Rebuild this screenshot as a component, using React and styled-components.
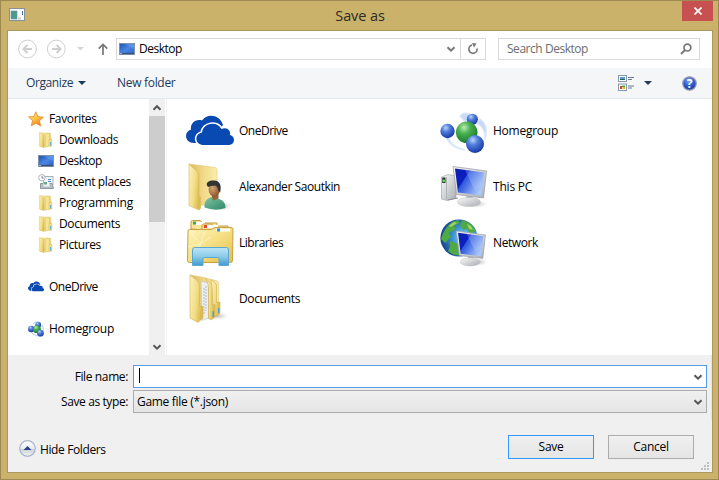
import React from "react";
import styled, { createGlobalStyle } from "styled-components";

const GlobalStyle = createGlobalStyle`
  * { box-sizing: border-box; }
  body { margin: 0; background: #cbb26b; }
`;

const Window = styled.div`
  width: 719px;
  height: 480px;
  padding: 0 5px 6px 6px;
  display: flex;
  flex-direction: column;
  background: #cbb26b;
  border: 1px solid #9e8a50;
  font: 12px/16px "Open Sans", "Noto Sans", sans-serif;
  color: #000;
`;

const TitleBar = styled.header`
  flex: 0 0 29px;
  display: grid;
  grid-template-columns: 33px 1fr 31px;
`;

const AppIcon = styled.div`
  padding: 7px 0 0 2px;
  line-height: 0;
`;

const Title = styled.h1`
  margin: 0;
  padding: 5px 2px 0 0;
  text-align: center;
  font: 400 14.5px/20px "Open Sans", sans-serif;
  letter-spacing: -0.1px;
  color: #2d2a22;
`;

const CloseButton = styled.button`
  width: 31px;
  height: 20px;
  padding: 0;
  border: 0;
  display: flex;
  align-items: center;
  justify-content: center;
  background: #c75050;
`;

const Client = styled.main`
  flex: 0 0 443px;
  width: 706px;
  border: 1px solid #ae975a;
  background: #fff;
  display: flex;
  flex-direction: column;
`;

const Text = styled.span`
  white-space: pre;
  letter-spacing: ${(p) => p.$ls ?? -0.3}px;
`;

const NavBar = styled.nav`
  flex: 0 0 37px;
  display: flex;
  align-items: flex-start;
  padding: 7px 12px 0 10px;
`;

const NavIcons = styled.div`
  width: 98px;
  height: 22px;
`;

const AddressBox = styled.div`
  width: 370px;
  height: 22px;
  border: 1px solid #d9d9d9;
  display: grid;
  grid-template-columns: 20px 1fr 14px 25px;
  align-items: center;
  padding-left: 2px;
  svg { display: block; }
`;

const Refresh = styled.div`
  height: 20px;
  border-left: 1px solid #d9d9d9;
  display: flex;
  align-items: center;
  justify-content: center;
`;

const SearchBox = styled.div`
  width: 202px;
  height: 22px;
  margin-left: 12px;
  padding: 0 7px 0 8px;
  border: 1px solid #d9d9d9;
  display: flex;
  align-items: center;
  justify-content: space-between;
  color: #6d6d6d;
`;

const ToolBar = styled.div`
  flex: 0 0 31px;
  display: flex;
  align-items: center;
  padding: 0 15px 0 18px;
  background: #f5f6f7;
  border-bottom: 1px solid #e4e7ea;
  color: #1e395b;
  svg { display: block; }
`;

const ToolItem = styled.div`
  display: flex;
  align-items: center;
  gap: ${(p) => p.$gap ?? 5}px;
  margin-left: ${(p) => (p.$push ? "auto" : `${p.$left ?? 0}px`)};
`;

const Body = styled.div`
  flex: 0 0 256px;
  display: flex;
`;

const Sidebar = styled.aside`
  width: 141px;
  padding-top: 9px;
`;

const SideRow = styled.div`
  height: 21px;
  margin-top: ${(p) => (p.$section ? 21 : 0)}px;
  padding-left: ${(p) => (p.$nested ? 30 : 20)}px;
  display: flex;
  align-items: center;
  gap: 5px;
  svg { display: block; }
`;

const ScrollBar = styled.div`
  width: 16px;
  background: #f0f0f0;
  display: flex;
  flex-direction: column;
  justify-content: space-between;
`;

const ScrollButton = styled.div`
  height: 17px;
  display: flex;
  align-items: center;
  justify-content: center;
`;

const Thumb = styled.div`
  height: 106px;
  margin-bottom: auto;
  background: #cdcdcd;
`;

const FileGrid = styled.section`
  flex: 1;
  margin-left: 1px;
  border-left: 1px solid #f3f3f3;
  padding: 4px 0 0 19px;
  display: grid;
  grid-template-columns: 254px 254px;
  grid-template-rows: repeat(4, 56px);
`;

const FileItem = styled.div`
  display: flex;
  align-items: center;
  gap: 5px;
  height: 56px;
  svg { display: block; overflow: visible; }
`;

const Footer = styled.footer`
  flex: 1;
  background: linear-gradient(#e3e3e3, #e3e3e3) right top / 1px 65px no-repeat #f0f0f0;
  padding: 10px 5px 0 0;
  display: flex;
  flex-direction: column;
`;

const Field = styled.label`
  display: grid;
  grid-template-columns: 120px 574px;
  column-gap: 5px;
  align-items: center;
  height: 23px;
  margin-bottom: 2px;
  text-align: right;
`;

const FieldBox = styled.div`
  height: 23px;
  padding: 0 3px 0 ${(p) => (p.$active ? 5 : 3)}px;
  border: 1px solid ${(p) => (p.$active ? "#569de5" : "#acacac")};
  background: ${(p) => (p.$active ? "#fff" : "linear-gradient(#f0f0f0, #e5e5e5)")};
  display: flex;
  align-items: center;
  justify-content: space-between;
`;

const Caret = styled.span`
  width: 1px;
  height: 15px;
  margin-top: -3px;
  background: #000;
`;

const Actions = styled.div`
  display: flex;
  align-items: center;
  height: 24px;
  margin-top: 20px;
  padding: 0 13px 0 11px;
`;

const HideFolders = styled.div`
  display: flex;
  align-items: center;
  gap: 4px;
  margin-right: auto;
  padding-top: 5px;
  svg { display: block; margin-top: -3px; }
`;

const Button = styled.button`
  width: 86px;
  height: 24px;
  margin-left: 14px;
  padding: 0 0 1px;
  border: 1px solid ${(p) => (p.$primary ? "#3399ff" : "#acacac")};
  background: linear-gradient(#f0f0f0, #e5e5e5);
  font: inherit;
  color: #000;
`;

const GripRow = styled.div`
  display: flex;
  justify-content: flex-end;
  padding-top: 3px;
  margin-right: -2px;
`;

const Stop = (o, c) => <stop key={o} offset={o} stopColor={c} />;

const HiddenSvg = styled.svg`
  display: block;
  width: 0;
  height: 0;
`;

const Gradients = () => (
  <HiddenSvg aria-hidden="true">
    <defs>
      <linearGradient id="folder" x1="0" x2="1" y2="1">{Stop(0, "#fff6c0")}{Stop(0.5, "#f5df83")}{Stop(1, "#e2bd4c")}</linearGradient>
      <linearGradient id="inner" x2="1" y2="0">{Stop(0, "#d9b75a")}{Stop(0.5, "#f0d988")}{Stop(1, "#fbeeae")}</linearGradient>
      <linearGradient id="flap" x2="1" y2="0.4">{Stop(0, "#fbf2bd")}{Stop(0.6, "#f2dd85")}{Stop(1, "#dcba52")}</linearGradient>
      <linearGradient id="screen" x2="1" y2="0.6">{Stop(0, "#0a20a8")}{Stop(0.4, "#0b1fc4")}{Stop(0.42, "#2b55dc")}{Stop(1, "#a9c8fa")}</linearGradient>
      <linearGradient id="desk" x2="1" y2="1">{Stop(0, "#1c4fae")}{Stop(0.5, "#4a86e3")}{Stop(1, "#2b62cb")}</linearGradient>
      <linearGradient id="metal" x2="1" y2="1">{Stop(0, "#fafafa")}{Stop(1, "#a9adb2")}</linearGradient>
      <linearGradient id="stand" x2="0" y2="1">{Stop(0, "#bfe6f6")}{Stop(0.5, "#8ccbe9")}{Stop(1, "#3e9bd0")}</linearGradient>
      <linearGradient id="star" x2="0.6" y2="1">{Stop(0, "#fff0a0")}{Stop(0.5, "#ffc84a")}{Stop(1, "#f4801c")}</linearGradient>
      <linearGradient id="shirt" x2="1" y2="1">{Stop(0, "#83c3a4")}{Stop(1, "#2e8a68")}</linearGradient>
      <radialGradient id="skin" cx="0.35" cy="0.4" r="0.7">{Stop(0, "#d6a56f")}{Stop(1, "#83502c")}</radialGradient>
      <radialGradient id="blue" cx="0.38" cy="0.28" r="0.7">{Stop(0, "#b9d3fb")}{Stop(0.4, "#527fdb")}{Stop(1, "#1b3daa")}</radialGradient>
      <radialGradient id="green" cx="0.38" cy="0.28" r="0.7">{Stop(0, "#bdecb5")}{Stop(0.4, "#4bb252")}{Stop(1, "#1a7d2c")}</radialGradient>
      <radialGradient id="globe" cx="0.65" cy="0.5" r="0.65">{Stop(0, "#8fdcf7")}{Stop(0.5, "#3d93d3")}{Stop(1, "#143f8c")}</radialGradient>
      <radialGradient id="help" cx="0.45" cy="0.3" r="0.7">{Stop(0, "#7ba4f5")}{Stop(0.6, "#2a55cf")}{Stop(1, "#1a37a0")}</radialGradient>
      <radialGradient id="shade">{Stop(0, "#bbb")}<stop offset="1" stopColor="#ddd" stopOpacity="0" /></radialGradient>
      <linearGradient id="round" x2="0" y2="1">{Stop(0, "#fdfdff")}{Stop(0.5, "#e9edf0")}{Stop(0.55, "#ccd3d8")}{Stop(1, "#f0f4f5")}</linearGradient>
    </defs>
  </HiddenSvg>
);

const Icon = ({ size = 48, children }) => (
  <svg width={size} height={size} viewBox="0 0 48 48">{children}</svg>
);

const OneDriveIcon = ({ size }) => (
  <Icon size={size}>
    <g transform={size ? "translate(0 -1)" : undefined}>
      <path fill="#094ab2" d="M11 36H8C-2 36-2 24 5 22.800C4 16 10 11.500 16 13.500C21 6 34 7.500 37 18L25 32Z" />
      <path fill="#094ab2" stroke="#fff" strokeWidth="3.200" paintOrder="stroke" d="M18 38C8.500 38 8 27 16 25.500C17 16 31 13.500 35.500 22C41 19.500 45 23.500 44 28C49.500 29 49.500 38 43 38Z" />
    </g>
  </Icon>
);

const UserIcon = () => (
  <Icon>
    <ellipse cx="35" cy="43" rx="12" ry="5" fill="url(#shade)" />
    <path d="M3 1L14 2.500L29 4.500Q31 5 31 7V39L13 43Z" fill="url(#inner)" stroke="#e3c870" strokeWidth=".6" />
    <path d="M3 1L11 8.500Q13 10.500 13 13V33L14.500 34V45.500L13 47L3 42.500Z" fill="url(#flap)" stroke="#d6b857" strokeWidth=".6" />
    <path d="M18.500 44.500C18 39 20 36 25.500 34L32 35.500C37 37 39.500 40 39.500 45Q29 48.500 18.500 44.500Z" fill="url(#shirt)" />
    <path d="M25 30L27 37.500L32.500 35.500V29Z" fill="#96623a" />
    <ellipse cx="28.200" cy="26.500" rx="5.600" ry="7.200" fill="url(#skin)" />
    <path d="M22 24C18.500 20 23 17.300 27.500 17.500C34 17 36 23 34 30L32.300 27Q31.500 23 29 22.500Q24.500 22.800 22 24Z" fill="#333" />
  </Icon>
);

const LibrariesIcon = () => (
  <Icon>
    <path d="M5 10V3Q5 1.500 6.500 1.500H14L17 4H31V12Z" fill="#f8e59a" stroke="#c49b44" />
    <rect x="7" y="3" width="12" height="3" fill="#fff" /><rect x="7" y="2.600" width="3" height="3" fill="#36ad46" />
    <path d="M16 14V6.500Q16 5 17.500 5H25L28 7H42V13Z" fill="#f8e59a" stroke="#c49b44" />
    <rect x="18" y="6" width="14" height="3" fill="#fff" /><rect x="18" y="6" width="3" height="3" fill="#e2482c" />
    <path d="M2 12Q2 10.500 3.500 10.500H25L29 8.500H45Q47 8.500 47 10.500L46.500 41.500Q46.500 43.500 44.500 43.500H3.500Q1.500 43.500 1.500 41.500Z" fill="url(#folder)" stroke="#c99f44" />
    <rect x="30" y="9.500" width="14" height="3" fill="#fff" /><rect x="31" y="9.500" width="3" height="3" fill="#2d8ece" />
    <path d="M4 12L14 25L7 40M18 13L15 25L2 28M14 25L25 18M14 25L21 38" stroke="#fffbe3" strokeWidth=".8" opacity=".7" fill="none" />
    <path d="M8.500 28.500H40.500Q42.500 28.500 42.500 31V46.500H33V40Q33 38.500 31.500 38.500H18.500Q17 38.500 17 40V46.500H6.500V31Q6.500 28.500 8.500 28.500Z" fill="url(#stand)" stroke="#5aa8d0" />
  </Icon>
);

const DocumentsIcon = () => (
  <Icon>
    <ellipse cx="31" cy="41" rx="12" ry="4" fill="url(#shade)" />
    <path d="M4 0L18 2.500L31 6Q32.500 6.500 32.500 8.500V38L14 44Z" fill="url(#inner)" stroke="#dfc570" strokeWidth=".6" />
    <path d="M25 4.500L29.500 8Q30.500 9 30.500 11V27.500L34 27V38.500L28 42Z" fill="url(#flap)" stroke="#cfae50" strokeWidth=".6" />
    <path d="M15 6L22.500 8V43L16 45.500Z" fill="#eceef0" stroke="#b5b5b5" strokeWidth=".5" />
    <path d="M18 13V40M20 11V36" stroke="#a3b0c2" strokeWidth=".8" strokeDasharray="2 1" />
    <path d="M19.500 3.500L24.500 8Q26 9.500 26 12V30L29 29.500V42L25 45L22.500 43.500V13Q22.500 8 19.500 3.500Z" fill="url(#flap)" stroke="#cfae50" strokeWidth=".6" />
    <path d="M26.500 36.500L28 36V41.500L26.500 42.500ZM32 33.500L33.300 33V37.500L32 38.300Z" fill="#39a4df" />
    <path d="M4 0L11 5.500Q13.500 7.500 13.500 11V31L17 31.500V43L12 47.500L4 43Z" fill="url(#flap)" stroke="#d3b554" strokeWidth=".6" />
  </Icon>
);

const HomegroupLarge = () => (
  <Icon>
    <path d="M9 31Q10 39 25 43Q12 42 6 31M20 9Q23 5 30 7L25 15ZM40 12Q49 18 45 32Q46 22 37 16Z" fill="#c8d9f5" stroke="#dce7fa" strokeWidth="1.500" />
    <circle cx="32.300" cy="12.300" r="5.600" fill="url(#blue)" />
    <circle cx="7.500" cy="24" r="7.200" fill="url(#blue)" />
    <circle cx="26.700" cy="25.300" r="10.800" fill="url(#green)" />
    <circle cx="35" cy="37" r="9" fill="url(#blue)" />
  </Icon>
);

const HomegroupSmall = () => (
  <svg width="16" height="16" viewBox="0 0 16 16">
    <path d="M3 10Q4 14 9 15M5 3Q7 .5 10 1M14 4Q16 7 15 10" fill="none" stroke="#b4cbf0" />
    <circle cx="10.200" cy="3.700" r="2.900" fill="url(#blue)" />
    <circle cx="3.200" cy="8" r="3.200" fill="url(#blue)" />
    <circle cx="8.900" cy="8.200" r="3.900" fill="url(#green)" />
    <circle cx="12.400" cy="12.200" r="3.400" fill="url(#blue)" />
  </svg>
);

const HomegroupIcon = ({ size }) => (size ? <HomegroupSmall /> : <HomegroupLarge />);

const Monitor = () => (
  <>
    <path d="M27 32L25 39H34L32 32Z" fill="#b5b8bb" />
    <ellipse cx="29" cy="39" rx="11.500" ry="4.600" fill="url(#metal)" stroke="#b9bbbd" strokeWidth=".5" />
    <path d="M13 3.500L46.500 8L43.500 35L16.500 31.500Z" fill="url(#metal)" stroke="#9ea2a7" strokeWidth=".8" />
    <path d="M15 5.500L44 9.500L41.500 32.500L18 29.500Z" fill="url(#screen)" />
    <path d="M25 7L44 9.500L42.500 22L35 28Z" fill="#cfe0ff" opacity=".25" />
  </>
);

const PCIcon = () => (
  <Icon>
    <ellipse cx="36" cy="41" rx="12" ry="4" fill="url(#shade)" />
    <path d="M1.500 14L8 11.500L16 13V35L7 37.500L1.500 36Z" fill="url(#metal)" stroke="#999da1" strokeWidth=".6" />
    <path d="M6.500 14V37" stroke="#b1b4b7" /><path d="M2.200 14.500H5.500V20H2.200Z" fill="#333" />
    <circle cx="3.800" cy="17.800" r="1.400" fill="#5be041" />
    <path d="M8 37L18 35" stroke="#8c9094" />
    <Monitor />
  </Icon>
);

const NetworkIcon = () => (
  <Icon>
    <circle cx="19" cy="19" r="18.600" fill="url(#globe)" />
    <path d="M1 20Q4 9 12 3L18 1L20 4L14 7L16 10L9 14L11 18L5 24ZM22 1Q32 3 36 12L30 15L27 10L23 11L20 7ZM10 22L18 25L20 36Q13 37 8 32L10 28Z" fill="#4fa944" />
    <path d="M9 7L14 3L17 4L11 8ZM27 5L31 7L33 11L29 10Z" fill="#a0d469" />
    <ellipse cx="38" cy="43" rx="10" ry="4" fill="url(#shade)" />
    <g transform="translate(5 9) scale(.87)"><Monitor /></g>
  </Icon>
);

const StarIcon = () => (
  <svg width="16" height="16" viewBox="0 0 16 16"><path d="M7.800 .8L10 5.700L15.400 6.200L11.400 9.700L12.600 15L8 12.200L3.300 14.700L4.600 9.500L.6 5.900L5.900 5.500Z" fill="url(#star)" stroke="#e78e2e" strokeWidth=".9" /></svg>
);

const FolderIcon = () => (
  <svg width="16" height="16" viewBox="0 0 16 16">
    <path d="M1.500 .8L12.500 1.300L13.300 14L2 14.500Z" fill="url(#folder)" stroke="#dcc263" strokeWidth=".5" />
    <path d="M1.300 .8L6.200 2.300V15.700L1.300 14Z" fill="url(#flap)" stroke="#e0c870" strokeWidth=".4" />
    <path d="M8.200 1.500L11.500 1.300V14L7.300 15.300V2.500Z" fill="#f5e498" stroke="#d8bd62" strokeWidth=".5" />
    <path d="M11 7.500H13.800V14H11Z" fill="#f4df8f" stroke="#d8b753" strokeWidth=".5" />
    <path d="M12.600 10V13.500" stroke="#4ab0e5" />
  </svg>
);

const DesktopIcon = () => (
  <svg width="16" height="16" viewBox="0 0 16 16">
    <rect x=".5" y="2.500" width="15" height="11" fill="url(#desk)" stroke="#8092a9" />
    <path d="M1 12.500H15" stroke="#3c4f69" strokeWidth="1.200" />
    <path d="M1 12.500H3" stroke="#7ab8ef" /><path d="M6 3H15V8Z" fill="#8abaf8" opacity=".3" />
  </svg>
);

const RecentIcon = () => (
  <svg width="16" height="16" viewBox="0 0 16 16">
    <rect x="5.500" y="2.500" width="9.500" height="8" fill="#f0f4f8" stroke="#a5b1bd" />
    <path d="M10 5.500H13M10 7.500H13" stroke="#4589c9" />
    <path d="M2.500 9.500H14L15.500 14.500H2.500Z" fill="#b6bec6" stroke="#8f98a1" />
    <path d="M5.500 8.500H11.500V12.500H5.500Z" fill="#f3f3f3" /><path d="M6 8H9V10.500H6Z" fill="#6ba68c" />
    <circle cx="3.900" cy="3.700" r="3.200" fill="#fff" stroke="#b0b7be" /><path d="M4 1.800V4H5.800" fill="none" stroke="#667" strokeWidth=".8" />
  </svg>
);

const Chevron = ({ up, color = "#555" }) => (
  <svg width="10" height="8" viewBox="0 0 10 8"><path d={up ? "M1.500 5.700L5 2.200L8.500 5.700" : "M1.500 2.200L5 5.700L8.500 2.200"} fill="none" stroke={color} strokeWidth="2" /></svg>
);

const Down = ({ color = "#1e395b" }) => (
  <svg width="8" height="4" viewBox="0 0 8 4"><path d="M0 0H8L4 4Z" fill={color} /></svg>
);

const SIDE = [
  ["Favorites", StarIcon, false, false, -0.35],
  ["Downloads", FolderIcon, true, false, -0.4],
  ["Desktop", DesktopIcon, true, false, -0.5],
  ["Recent places", RecentIcon, true, false, -0.36],
  ["Programming", FolderIcon, true, false, -0.24],
  ["Documents", FolderIcon, true, false, -0.35],
  ["Pictures", FolderIcon, true, false, -0.4],
  ["OneDrive", OneDriveIcon, false, true, -0.5],
  ["Homegroup", HomegroupIcon, false, true, -0.25],
];

const FILES = [
  ["OneDrive", OneDriveIcon, -0.5],
  ["Homegroup", HomegroupIcon, -0.25],
  ["Alexander Saoutkin", UserIcon, -0.42],
  ["This PC", PCIcon, -0.2],
  ["Libraries", LibrariesIcon, -0.47],
  ["Network", NetworkIcon, -0.4],
  ["Documents", DocumentsIcon, -0.35],
];

export default function App() {
  return (
    <Window>
      <GlobalStyle />
      <Gradients />
      <TitleBar>
        <AppIcon>
          <svg width="16" height="14" viewBox="0 0 16 14">
            <rect x=".5" y=".5" width="15" height="12" fill="#fafafa" stroke="#87919b" />
            <rect x="2" y="3" width="6" height="8" fill="#4b9b8c" stroke="#6e94a6" strokeWidth=".6" />
            <path d="M9 10.500H12" stroke="#ccc" strokeWidth="2" /><path d="M13.500 3V7" stroke="#3d7399" />
          </svg>
        </AppIcon>
        <Title>Save as</Title>
        <CloseButton aria-label="Close">
          <svg width="8" height="8" viewBox="0 0 8 8"><path d="M.5 .5L7.500 7.500M7.500 .5L.5 7.500" stroke="#fff" strokeWidth="1.700" /></svg>
        </CloseButton>
      </TitleBar>
      <Client>
        <NavBar>
          <NavIcons>
            <svg width="98" height="22" viewBox="0 0 98 22" fill="none">
              <g stroke="#cfcfcf">
                <circle cx="9.500" cy="11" r="8.900" /><circle cx="38.300" cy="11" r="8.900" />
                <path strokeWidth="2" d="M14 11H6M9.500 7L5.500 11L9.500 15M34 11H42M38.500 7L42.500 11L38.500 15" />
              </g>
              <path d="M59 9H66L62.500 12.500Z" fill="#d4d4d4" />
              <path d="M85 17V7M80.700 10.700L85 6.400L89.300 10.700" stroke="#777" strokeWidth="1.700" />
            </svg>
          </NavIcons>
          <AddressBox>
            <DesktopIcon />
            <Text $ls={-0.5}>Desktop</Text>
            <Chevron color="#777" />
            <Refresh>
              <svg width="12" height="12" viewBox="0 0 12 12"><path d="M5 2.200A4.100 4.100 0 1 0 10 5.500" fill="none" stroke="#777" strokeWidth="1.700" /><path d="M5 0L9.500 .5L7 4.500Z" fill="#777" /></svg>
            </Refresh>
          </AddressBox>
          <SearchBox>
            <Text $ls={-0.46}>Search Desktop</Text>
            <svg width="12" height="12" viewBox="0 0 12 12"><circle cx="7.400" cy="4.600" r="3.400" fill="none" stroke="#777" strokeWidth="1.700" /><path d="M5 7L1 11" stroke="#777" strokeWidth="2" /></svg>
          </SearchBox>
        </NavBar>
        <ToolBar>
          <ToolItem><Text $ls={-0.4}>Organize</Text><Down /></ToolItem>
          <ToolItem $left={31}><Text>New folder</Text></ToolItem>
          <ToolItem $push $gap={9}>
            <svg width="17" height="16" viewBox="0 0 17 16" fill="none">
              <rect x=".5" y=".5" width="8" height="6" fill="#fff" stroke="#8799ad" /><rect x="2" y="2" width="5" height="3" fill="#5b9bd1" /><path d="M2 4.500H7" stroke="#24645b" />
              <rect x=".5" y="9" width="8" height="6.500" fill="#fff" stroke="#8799ad" /><path d="M2 11H4V14H2Z" fill="#dc3c28" /><path d="M4 10.500H7V12H4Z" fill="#3cab48" /><path d="M4.500 12H7V14H4.500Z" fill="#e7b42c" />
              <path d="M10 2.500H16M10 4.500H14M10 11H16M10 13H14" stroke="#687c95" />
            </svg>
            <Down />
          </ToolItem>
          <ToolItem $left={30}>
            <svg width="15" height="15" viewBox="0 0 15 15"><circle cx="7.500" cy="7.500" r="6.700" fill="url(#help)" stroke="#9098ab" strokeWidth="1.300" /><text x="7.500" y="11.800" textAnchor="middle" fill="#fff" fontSize="12" fontWeight="700" fontFamily="Open Sans">?</text></svg>
          </ToolItem>
        </ToolBar>
        <Body>
          <Sidebar>
            {SIDE.map(([name, Glyph, nested, section, ls]) => (
              <SideRow key={name} $nested={nested} $section={section}><Glyph size={16} /><Text $ls={ls}>{name}</Text></SideRow>
            ))}
          </Sidebar>
          <ScrollBar>
            <ScrollButton><Chevron up /></ScrollButton>
            <Thumb />
            <ScrollButton><Chevron /></ScrollButton>
          </ScrollBar>
          <FileGrid>
            {FILES.map(([name, Glyph, ls]) => (
              <FileItem key={name}><Glyph /><Text $ls={ls}>{name}</Text></FileItem>
            ))}
          </FileGrid>
        </Body>
        <Footer>
          <Field><Text $ls={-0.38}>File name:</Text><FieldBox $active><Caret /><Chevron /></FieldBox></Field>
          <Field><Text $ls={-0.4}>Save as type:</Text><FieldBox><Text>Game file (*.json)</Text><Chevron /></FieldBox></Field>
          <Actions>
            <HideFolders>
              <svg width="17" height="17" viewBox="0 0 17 17"><circle cx="8.500" cy="8.500" r="7.800" fill="url(#round)" stroke="#a9b5cb" strokeWidth="1.200" /><path d="M4.500 10L8.500 6L12.500 10Z" fill="#27418c" /></svg>
              <Text $ls={-0.38}>Hide Folders</Text>
            </HideFolders>
            <Button $primary><Text>Save</Text></Button>
            <Button><Text>Cancel</Text></Button>
          </Actions>
          <GripRow>
            <svg width="8" height="8" viewBox="0 0 8 8" fill="#bfbfbf"><path d="M6 0H8V2H6ZM3 3H5V5H3ZM6 3H8V5H6ZM0 6H2V8H0ZM3 6H5V8H3ZM6 6H8V8H6Z" /></svg>
          </GripRow>
        </Footer>
      </Client>
    </Window>
  );
}
